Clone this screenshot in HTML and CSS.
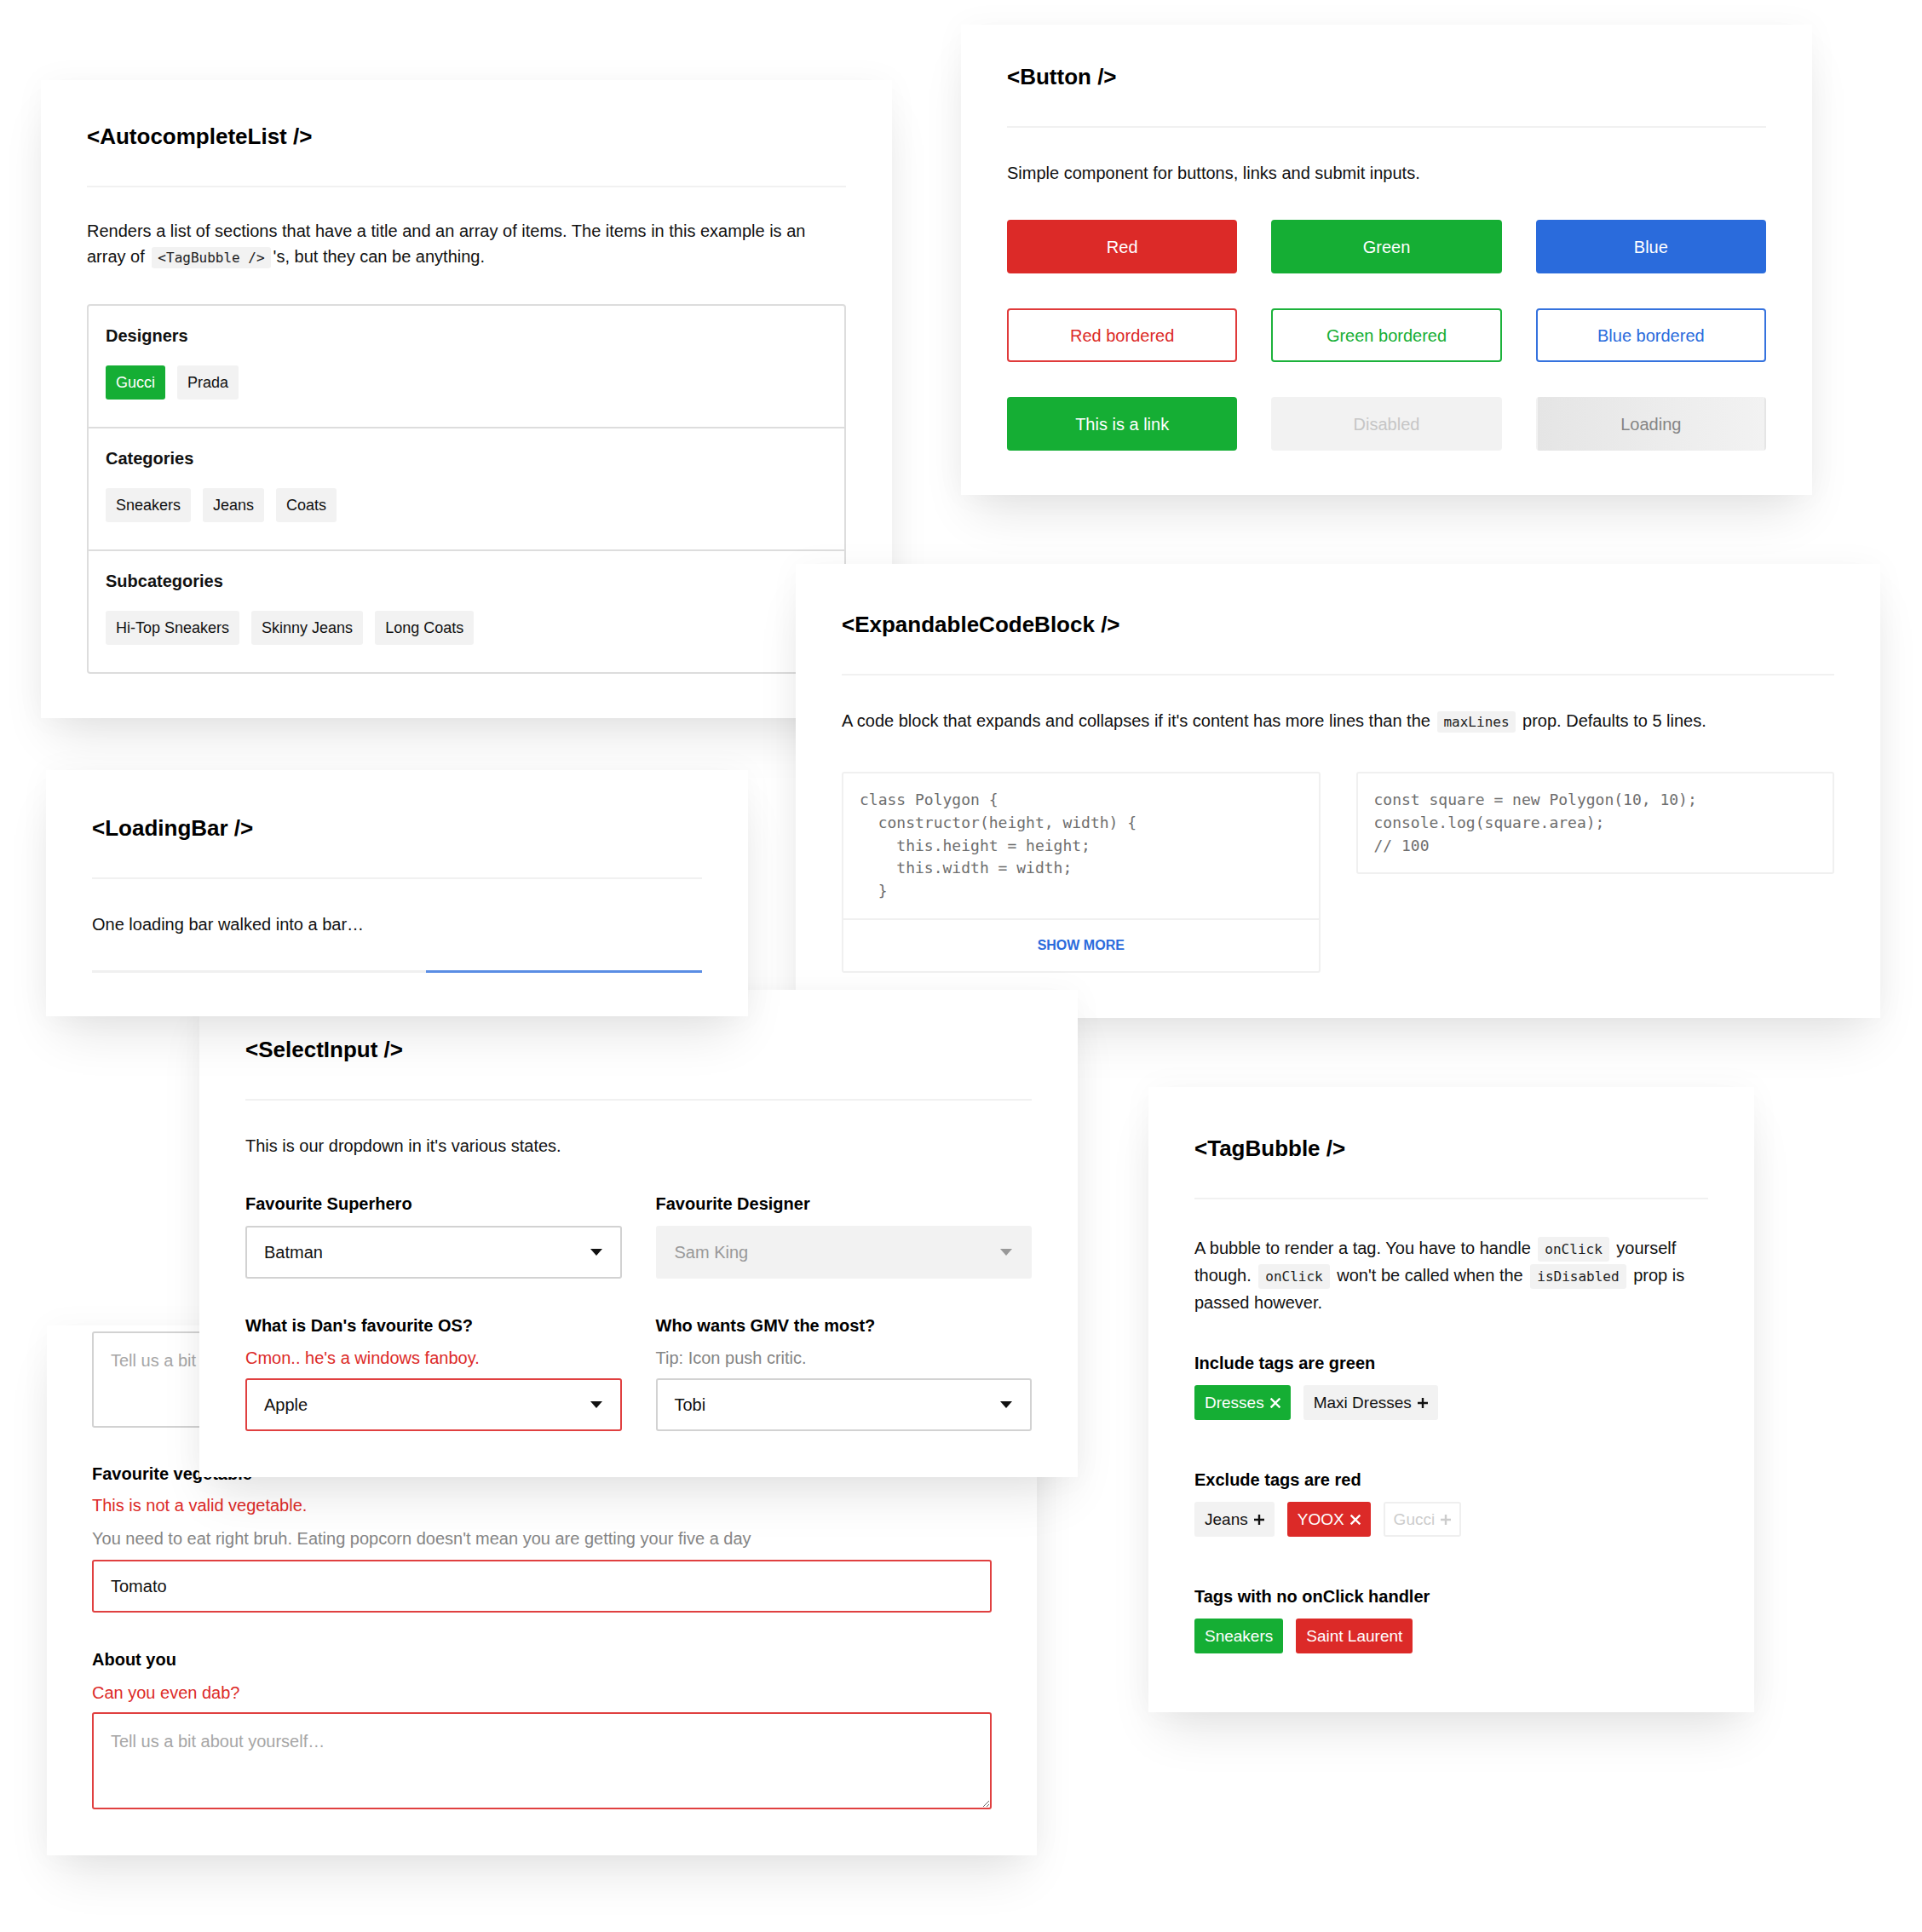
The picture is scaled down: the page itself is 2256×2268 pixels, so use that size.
FILE: index.html
```html
<!DOCTYPE html>
<html lang="en">
<head>
<meta charset="utf-8">
<title>Components</title>
<link rel="stylesheet" href="styles.css">
</head>
<body>
<main class="canvas">

  <section class="card card-form">
    <textarea class="field-area field-area-top" placeholder="Tell us a bit about yourself…"></textarea>
    <div class="label form-label-first">Favourite vegetable</div>
    <p class="msg msg-error msg-tight">This is not a valid vegetable.</p>
    <p class="msg msg-help">You need to eat right bruh. Eating popcorn doesn't mean you are getting your five a day</p>
    <div class="field field-error field-input">Tomato</div>
    <div class="label form-label">About you</div>
    <p class="msg msg-error">Can you even dab?</p>
    <textarea class="field-area field-area-error" placeholder="Tell us a bit about yourself…"></textarea>
  </section>

  <section class="card card-autocomplete">
    <header class="card-head"><h2 class="card-title">&lt;AutocompleteList /&gt;</h2></header>
    <p class="desc desc-ac">Renders a list of sections that have a title and an array of items. The items in this example is an array of <code class="code">&lt;TagBubble /&gt;</code>'s, but they can be anything.</p>
    <div class="ac-list">
      <div class="ac-section">
        <h3 class="ac-title">Designers</h3>
        <div class="tags"><span class="tag tag-green">Gucci</span><span class="tag">Prada</span></div>
      </div>
      <div class="ac-section">
        <h3 class="ac-title">Categories</h3>
        <div class="tags"><span class="tag">Sneakers</span><span class="tag">Jeans</span><span class="tag">Coats</span></div>
      </div>
      <div class="ac-section">
        <h3 class="ac-title">Subcategories</h3>
        <div class="tags"><span class="tag">Hi-Top Sneakers</span><span class="tag">Skinny Jeans</span><span class="tag">Long Coats</span></div>
      </div>
    </div>
  </section>

  <section class="card card-button">
    <header class="card-head"><h2 class="card-title">&lt;Button /&gt;</h2></header>
    <p class="desc">Simple component for buttons, links and submit inputs.</p>
    <div class="btn-grid">
      <button class="btn btn-red">Red</button>
      <button class="btn btn-green">Green</button>
      <button class="btn btn-blue">Blue</button>
      <button class="btn btn-red-o">Red bordered</button>
      <button class="btn btn-green-o">Green bordered</button>
      <button class="btn btn-blue-o">Blue bordered</button>
      <a class="btn btn-green">This is a link</a>
      <button class="btn btn-disabled">Disabled</button>
      <button class="btn btn-loading">Loading</button>
    </div>
  </section>

  <section class="card card-code">
    <header class="card-head"><h2 class="card-title">&lt;ExpandableCodeBlock /&gt;</h2></header>
    <p class="desc desc-code">A code block that expands and collapses if it's content has more lines than the <code class="code">maxLines</code> prop. Defaults to 5 lines.</p>
    <div class="code-row">
      <div class="code-block">
<pre class="code-pre">class Polygon {
  constructor(height, width) {
    this.height = height;
    this.width = width;
  }</pre>
        <div class="show-more">SHOW MORE</div>
      </div>
      <div class="code-block">
<pre class="code-pre">const square = new Polygon(10, 10);
console.log(square.area);
// 100</pre>
      </div>
    </div>
  </section>

  <section class="card card-select">
    <header class="card-head"><h2 class="card-title">&lt;SelectInput /&gt;</h2></header>
    <p class="desc">This is our dropdown in it's various states.</p>
    <div class="sel-grid">
      <div class="sel-group">
        <div class="label">Favourite Superhero</div>
        <div class="field sel-box">Batman<svg class="caret" width="14" height="8" viewBox="0 0 14 8"><polygon points="0,0 14,0 7,8"/></svg></div>
      </div>
      <div class="sel-group">
        <div class="label">Favourite Designer</div>
        <div class="field sel-box sel-disabled">Sam King<svg class="caret" width="14" height="8" viewBox="0 0 14 8"><polygon points="0,0 14,0 7,8"/></svg></div>
      </div>
      <div class="sel-group">
        <div class="label">What is Dan's favourite OS?</div>
        <p class="msg msg-error sel-msg">Cmon.. he's a windows fanboy.</p>
        <div class="field sel-box field-error sel-after-msg">Apple<svg class="caret" width="14" height="8" viewBox="0 0 14 8"><polygon points="0,0 14,0 7,8"/></svg></div>
      </div>
      <div class="sel-group">
        <div class="label">Who wants GMV the most?</div>
        <p class="msg msg-help sel-msg">Tip: Icon push critic.</p>
        <div class="field sel-box sel-after-msg">Tobi<svg class="caret" width="14" height="8" viewBox="0 0 14 8"><polygon points="0,0 14,0 7,8"/></svg></div>
      </div>
    </div>
  </section>

  <section class="card card-loading">
    <header class="card-head"><h2 class="card-title">&lt;LoadingBar /&gt;</h2></header>
    <p class="desc">One loading bar walked into a bar…</p>
    <div class="loading-track"><div class="loading-fill" style="width:45.2%"></div></div>
  </section>

  <section class="card card-tag">
    <header class="card-head"><h2 class="card-title">&lt;TagBubble /&gt;</h2></header>
    <p class="desc desc-tag">A bubble to render a tag. You have to handle <code class="code">onClick</code> yourself though. <code class="code">onClick</code> won't be called when the <code class="code">isDisabled</code> prop is passed however.</p>
    <div class="tb-group tb-group-first">
      <h3 class="tb-title">Include tags are green</h3>
      <div class="tb-tags">
        <span class="tb-tag tb-green">Dresses<svg class="tb-icon" width="12" height="12" viewBox="0 0 12 12"><path d="M1.5 1.5 L10.5 10.5 M10.5 1.5 L1.5 10.5"/></svg></span>
        <span class="tb-tag">Maxi Dresses<svg class="tb-icon" width="12" height="12" viewBox="0 0 12 12"><path d="M6 0.5 V11.5 M0.5 6 H11.5"/></svg></span>
      </div>
    </div>
    <div class="tb-group">
      <h3 class="tb-title">Exclude tags are red</h3>
      <div class="tb-tags">
        <span class="tb-tag">Jeans<svg class="tb-icon" width="12" height="12" viewBox="0 0 12 12"><path d="M6 0.5 V11.5 M0.5 6 H11.5"/></svg></span>
        <span class="tb-tag tb-red">YOOX<svg class="tb-icon" width="12" height="12" viewBox="0 0 12 12"><path d="M1.5 1.5 L10.5 10.5 M10.5 1.5 L1.5 10.5"/></svg></span>
        <span class="tb-tag tb-disabled">Gucci<svg class="tb-icon" width="12" height="12" viewBox="0 0 12 12"><path d="M6 0.5 V11.5 M0.5 6 H11.5"/></svg></span>
      </div>
    </div>
    <div class="tb-group">
      <h3 class="tb-title">Tags with no onClick handler</h3>
      <div class="tb-tags">
        <span class="tb-tag tb-green">Sneakers</span>
        <span class="tb-tag tb-red">Saint Laurent</span>
      </div>
    </div>
  </section>

</main>
</body>
</html>
```

FILE: styles.css
```css
* { box-sizing: border-box; }

html, body {
  margin: 0;
  padding: 0;
}

body {
  background: #ffffff;
  font-family: "Liberation Sans", Arial, Helvetica, sans-serif;
  color: #111111;
  font-size: 20px;
  line-height: 28px;
}

.canvas {
  position: relative;
  width: 2256px;
  height: 2268px;
  overflow: hidden;
}

/* ---------- cards (windows on a free canvas) ---------- */
.card {
  position: absolute;
  background: #ffffff;
  padding: var(--pt) 54px 0;
  box-shadow: 0 32px 56px -14px rgba(0, 0, 0, 0.11), 0 0 36px rgba(0, 0, 0, 0.035);
}

.card-autocomplete { --pt: 50px; left: 48px;   top: 94px;   width: 999px;  height: 749px; z-index: 1; }
.card-button       { --pt: 45px; left: 1128px; top: 29px;   width: 999px;  height: 552px; z-index: 1; }
.card-code         { --pt: 55px; left: 934px;  top: 662px;  width: 1273px; height: 533px; z-index: 2; }
.card-select       { --pt: 54px; left: 234px;  top: 1162px; width: 1031px; height: 572px; z-index: 3; }
.card-loading      { --pt: 52px; left: 54px;   top: 904px;  width: 824px;  height: 289px; z-index: 4; }
.card-form         { --pt: 7px;  left: 55px;   top: 1556px; width: 1162px; height: 622px; z-index: 1; padding-right: 53px; padding-left: 53px; }
.card-tag          { --pt: 56px; left: 1348px; top: 1276px; width: 711px;  height: 734px; z-index: 1; }

.card-head {
  padding-bottom: 42px;
  border-bottom: 2px solid #f1f1f1;
}

.card-title {
  margin: 0;
  font-size: 26px;
  line-height: 32px;
  font-weight: 700;
  color: #000000;
}

.desc {
  margin: 37px 0 0;
  line-height: 32px;
}

.desc-ac {
  margin-top: 37px;
  line-height: 29.5px;
}

.desc-tag { margin-top: 41px; }

.code {
  font-family: "DejaVu Sans Mono", "Liberation Mono", monospace;
  font-size: 16px;
  line-height: 16px;
  background: #f2f2f2;
  border-radius: 3px;
  padding: 3px 7px;
  margin: 0 3px;
  color: #222222;
}

.desc-tag .code { padding: 5px 8px; }

/* ---------- autocomplete ---------- */
.ac-list {
  margin-top: 41px;
  border: 2px solid #dddddd;
  border-radius: 4px;
}

.ac-section {
  padding: 21px 20px 32px;
  border-bottom: 2px solid #dddddd;
}

.ac-section:last-child { border-bottom: none; }

.ac-title {
  margin: 0;
  font-size: 20px;
  line-height: 28px;
  font-weight: 700;
}

.tags {
  display: flex;
  gap: 14px;
  margin-top: 21px;
}

.tag {
  display: inline-flex;
  align-items: center;
  height: 40px;
  padding: 0 12px;
  background: #f2f2f2;
  border-radius: 3px;
  font-size: 18px;
  color: #111111;
}

.tag-green {
  background: #15ae34;
  color: #ffffff;
}

/* ---------- buttons ---------- */
.btn-grid {
  display: grid;
  grid-template-columns: repeat(3, 1fr);
  column-gap: 40px;
  row-gap: 41px;
  margin-top: 39px;
}

.btn {
  display: flex;
  align-items: center;
  justify-content: center;
  height: 63px;
  margin: 0;
  padding: 0;
  border: 2px solid transparent;
  border-radius: 4px;
  font-family: inherit;
  font-size: 20px;
  line-height: 28px;
  text-decoration: none;
  background: #ffffff;
}

.btn-red   { background: #dc2a28; border-color: #dc2a28; color: #ffffff; }
.btn-green { background: #15ae34; border-color: #15ae34; color: #ffffff; }
.btn-blue  { background: #2a6bdc; border-color: #2a6bdc; color: #ffffff; }
.btn-red-o   { border-color: #e03a3a; color: #dc2a28; }
.btn-green-o { border-color: #1cb23b; color: #15ae34; }
.btn-blue-o  { border-color: #3572de; color: #2a6bdc; }
.btn-disabled { background: #f2f2f2; border-color: #f2f2f2; color: #c6c6c6; }
.btn-loading {
  background: linear-gradient(90deg, #e5e5e5 0%, #f2f2f2 100%);
  border-color: transparent;
  color: #858585;
}

/* ---------- expandable code block ---------- */
.code-row {
  display: grid;
  grid-template-columns: 1fr 1fr;
  column-gap: 42px;
  align-items: start;
  margin-top: 44px;
}

.code-block {
  border: 2px solid #f0f0f0;
  border-radius: 3px;
}

.code-pre {
  margin: 0;
  padding: 18px 19px;
  font-family: "DejaVu Sans Mono", "Liberation Mono", monospace;
  font-size: 18px;
  line-height: 26.75px;
  color: #6e6e6e;
}

.show-more {
  display: flex;
  align-items: center;
  justify-content: center;
  height: 62px;
  border-top: 2px solid #f0f0f0;
  font-size: 16px;
  font-weight: 700;
  color: #2a6bdc;
}

/* ---------- loading bar ---------- */
.loading-track {
  display: flex;
  justify-content: flex-end;
  height: 3px;
  margin-top: 38px;
  background: #f0f0f0;
}

.loading-fill {
  height: 3px;
  background: #5a8de4;
}

/* ---------- labels, messages, fields ---------- */
.label {
  font-weight: 700;
  font-size: 20px;
  line-height: 28px;
  color: #000000;
}

.msg {
  margin: 11px 0 0;
  font-size: 20px;
  line-height: 28px;
}

.msg-error { color: #dc2a28; }
.msg-help  { color: #858585; }

.field {
  display: flex;
  align-items: center;
  justify-content: space-between;
  height: 62px;
  padding: 0 21px 0 20px;
  border: 2px solid #d2d2d2;
  border-radius: 3px;
  background: #ffffff;
  font-size: 20px;
  color: #111111;
}

.field-error { border-color: #e04040; }

.caret { fill: #111111; }

/* select card */
.sel-grid {
  display: grid;
  grid-template-columns: 1fr 1fr;
  column-gap: 40px;
  row-gap: 41px;
  margin-top: 38px;
  align-items: start;
}

.sel-box { margin-top: 12px; }
.sel-msg { margin-top: 10px; }
.sel-after-msg { margin-top: 10px; }

.sel-disabled {
  background: #f2f2f2;
  border-color: #f2f2f2;
  color: #999999;
}

.sel-disabled .caret { fill: #999999; }

/* form card */
.field-area {
  display: block;
  width: 100%;
  height: 114px;
  margin: 0;
  padding: 18px 20px;
  border: 2px solid #d2d2d2;
  border-radius: 3px;
  background: #ffffff;
  font-family: inherit;
  font-size: 20px;
  line-height: 28px;
  color: #111111;
  resize: vertical;
  outline: none;
}

.field-area::placeholder { color: #a6a6a6; }

.field-area-top { height: 113px; }
.field-area-error { margin-top: 9px; border-color: #e04040; }

.form-label-first { margin-top: 40px; }
.form-label { margin-top: 41px; }
.msg-tight { margin-top: 9px; }
.field-input { margin-top: 11px; }

/* ---------- tag bubble ---------- */
.tb-group { margin-top: 56px; }
.tb-group-first { margin-top: 41px; }

.tb-title {
  margin: 0;
  font-size: 20px;
  line-height: 28px;
  font-weight: 700;
  color: #000000;
}

.tb-tags {
  display: flex;
  gap: 15px;
  margin-top: 12px;
}

.tb-tag {
  display: inline-flex;
  align-items: center;
  gap: 7px;
  height: 41px;
  padding: 0 10px;
  border: 2px solid #f2f2f2;
  border-radius: 3px;
  background: #f2f2f2;
  font-size: 19px;
  color: #111111;
}

.tb-icon {
  fill: none;
  stroke: #111111;
  stroke-width: 2.4;
  stroke-linecap: square;
}

.tb-green { background: #15ae34; border-color: #15ae34; color: #ffffff; }
.tb-red   { background: #dc2a28; border-color: #dc2a28; color: #ffffff; }
.tb-green .tb-icon, .tb-red .tb-icon { stroke: #ffffff; }

.tb-disabled {
  background: #ffffff;
  border-color: #efefef;
  color: #cccccc;
}

.tb-disabled .tb-icon { stroke: #cccccc; }
```
